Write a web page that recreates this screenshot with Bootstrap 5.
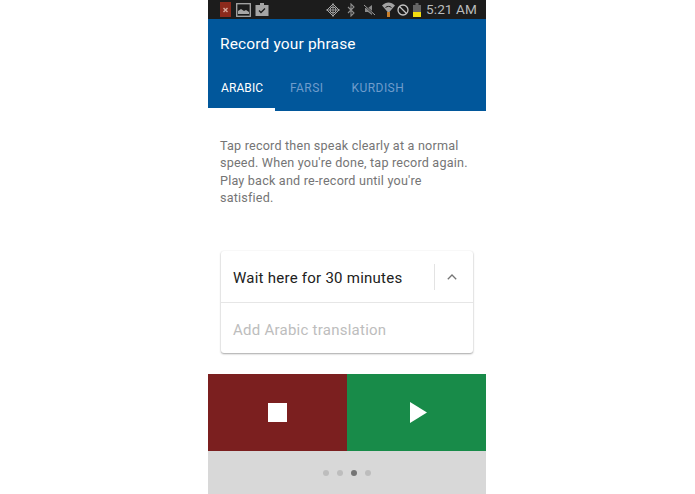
<!doctype html>
<html lang="en"><head><meta charset="utf-8"><title>Record your phrase</title>
<link rel="stylesheet" href="https://cdn.jsdelivr.net/npm/bootstrap@5.3.0/dist/css/bootstrap.min.css">
<style>
html,body{height:100%;background:#fff}
body{font-family:Roboto,"Liberation Sans",sans-serif;overflow:hidden}
.phone{width:278px;height:494px;margin-left:208px}
.phone>*{flex:none}
.statusbar{height:19px;background:#1c1c1c;color:#b4b6b6;padding-left:12px}
.statusbar svg{display:block;flex:none}
.clock{font-size:13.6px;line-height:19px;letter-spacing:.1px;color:#b9bbbb;white-space:nowrap;margin-left:5px}
.appbar{background:#01579b;height:92px;color:#fff}
.apptitle{font-size:15.5px;line-height:20px;padding:15px 12px 0;letter-spacing:.15px}
.tabrow{margin-top:19px;height:38px}
.tabitem{font-size:12px;line-height:14px;color:#6f9ccb;padding:8px 0 0;letter-spacing:.45px}
.tabitem.on{color:#fff;border-bottom:3px solid #fff;width:67px;padding-left:13px;margin-right:15px;letter-spacing:.1px}
.tabitem.farsi{margin-right:28px}
.hint{font-size:12.6px;line-height:17.4px;color:#757575;padding:26px 12px 0 12px;margin:0;height:140px;letter-spacing:.2px}
.phrase{margin:0 13px;border-radius:3px;box-shadow:0 1px 2px rgba(0,0,0,.35),0 0 2px rgba(0,0,0,.06);height:102px}
.phrase-top{height:52px;border-bottom:1px solid #e6e6e6;padding-left:12px}
.phrase-top span{font-size:15px;color:#212121;letter-spacing:.25px;padding-top:3px}
.chev{width:39px;height:26px;border-left:1px solid #e3e3e3;padding-right:4px;margin-top:1px}
.phrase-add{font-size:15px;color:#bdbdbd;padding:17px 12px 0;line-height:20px;letter-spacing:.25px}
.controls{height:77px;margin-top:21px}
.stopbtn{background:#7b1f1f;width:139px}
.playbtn{background:#188b49;flex:1}
.stopsq{width:19px;height:19px;background:#fff}
.playbtn svg{margin-left:3px}
.pager{background:#d8d8d8;height:43px;gap:8px}
.pip{width:6px;height:6px;border-radius:50%;background:#bdbdbd}
.pip.on{background:#757575}
.ic-1{margin-left:5px}.ic-2{margin-left:4px}.ic-3{margin-left:57px}.ic-4{margin-left:7px}.ic-5{margin-left:9px}.ic-6{margin-left:6px}.ic-7{margin-left:2px}.ic-8{margin-left:4px}
</style></head>
<body>
<div class="phone d-flex flex-column">
 <div class="statusbar d-flex align-items-center">
  <svg width="11" height="15" viewBox="0 0 11 15"><rect width="11" height="15" fill="#8c2a1c"/><path d="M3.500 6l4 4M7.500 6l-4 4" stroke="#d9a79b" stroke-width="1.400"/></svg>
  <svg class="ic-1" width="15" height="14" viewBox="0 0 15 14"><rect x=".7" y=".7" width="13.600" height="12.600" fill="none" stroke="#a8a8a8" stroke-width="1.300"/><path d="M2 11V8l3-2 3 2 2-1 3 2v2z" fill="#a8a8a8"/></svg>
  <svg class="ic-2" width="14" height="15" viewBox="0 0 14 15"><path d="M5 3V1h4v2h4.500v11H.5V3z" fill="#a5a5a5"/><path d="M4 8.500l2 2 4-4" fill="none" stroke="#1c1c1c" stroke-width="1.300"/></svg>
  <svg class="ic-3" width="14" height="14" viewBox="0 0 14 14"><path d="M7 1l6 6-6 6-6-6z" fill="none" stroke="#a8a8a8"/><circle cx="7" cy="7" r="3" fill="none" stroke="#a8a8a8"/><path d="M7 0v14M0 7h14" stroke="#a8a8a8" stroke-width=".8"/></svg>
  <svg class="ic-4" width="8" height="14" viewBox="0 0 8 14"><path d="M1 4l6 6-3 3V1l3 3-6 6" fill="none" stroke="#8f8f8f" stroke-width="1.100"/></svg>
  <svg class="ic-5" width="12" height="12" viewBox="0 0 12 12"><path d="M1 4h3l4-3v10L4 8H1z" fill="#8a8a8a"/><path d="M0 1l11 10" stroke="#1c1c1c" stroke-width="2"/><path d="M0 1l11 10" stroke="#a0a0a0"/></svg>
  <svg class="ic-6" width="13" height="15" viewBox="0 0 13 15"><path d="M0 3.500C4-.5 9-.5 13 3.500L6.500 11z" fill="#a3a3a3"/><path d="M3.500 5.500c2-1.500 4-1.500 6 0" stroke="#1c1c1c" fill="none"/><rect x="5" y="10" width="3" height="5" fill="#c9802b"/></svg>
  <svg class="ic-7" width="12" height="12" viewBox="0 0 12 12"><circle cx="6" cy="6" r="5" fill="none" stroke="#c4c4c4" stroke-width="1.300"/><path d="M2.500 2.500l7 7" stroke="#c4c4c4" stroke-width="1.300"/></svg>
  <svg class="ic-8" width="8" height="14" viewBox="0 0 8 14"><rect x="2.500" width="3" height="2" fill="#666"/><rect y="2" width="8" height="7" fill="#666"/><rect y="9" width="8" height="5" fill="#f2dd10"/></svg>
  <span class="clock">5:21 AM</span>
 </div>
 <div class="appbar">
  <div class="apptitle">Record your phrase</div>
  <div class="tabrow d-flex">
   <div class="tabitem on">ARABIC</div>
   <div class="tabitem farsi">FARSI</div>
   <div class="tabitem">KURDISH</div>
  </div>
 </div>
 <p class="hint">Tap record then speak clearly at a normal speed. When you're done, tap record again. Play back and re-record until you're satisfied.</p>
 <div class="phrase bg-white">
  <div class="phrase-top d-flex align-items-center justify-content-between">
   <span>Wait here for 30 minutes</span>
   <div class="chev d-flex align-items-center justify-content-center">
    <svg width="10" height="6" viewBox="0 0 10 6"><path d="M.8 5.200L5 1l4.200 4.200" fill="none" stroke="#757575" stroke-width="1.300"/></svg>
   </div>
  </div>
  <div class="phrase-add">Add Arabic translation</div>
 </div>
 <div class="controls d-flex">
  <div class="stopbtn d-flex align-items-center justify-content-center"><div class="stopsq"></div></div>
  <div class="playbtn d-flex align-items-center justify-content-center">
   <svg width="17" height="21" viewBox="0 0 17 21"><path d="M0 0l17 10.500L0 21z" fill="#fff"/></svg>
  </div>
 </div>
 <div class="pager d-flex align-items-center justify-content-center">
  <span class="pip"></span><span class="pip"></span><span class="pip on"></span><span class="pip"></span>
 </div>
</div>
</body></html>
